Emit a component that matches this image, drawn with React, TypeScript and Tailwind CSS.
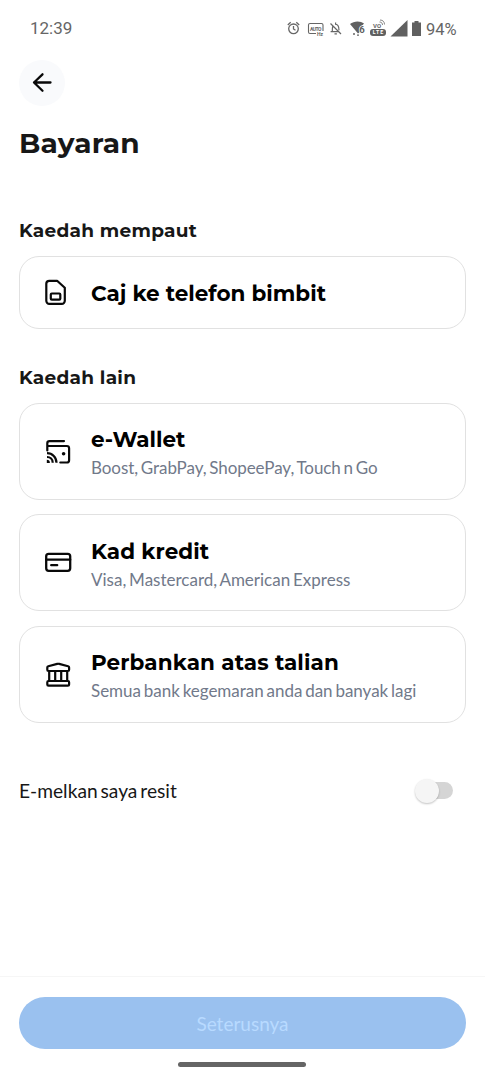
import type { ReactNode } from "react";

const heading = "font-['Montserrat','Inter',sans-serif] font-bold whitespace-nowrap";

function StatusIcons() {
  return (
    <svg width="138" height="20" viewBox="0 0 138 20" fill="none" stroke="#666" strokeWidth="1.3">
      <circle cx="6.5" cy="9.8" r="4.8" />
      <path d="M6.5 7v3l2 1.3M.8 6 3.7 3.3M12.2 6 9.3 3.3" />
      <path d="M29 14.5h-6a1.5 1.5 0 0 1-1.5-1.5V6a1.5 1.5 0 0 1 1.5-1.5h11.5A1.5 1.5 0 0 1 36 6v6" strokeWidth="1.1" />
      <text x="22.9" y="11.5" fontSize="5" fontWeight="700" fontFamily="Roboto, sans-serif" fill="#666" stroke="none" textLength="11.5">AUTO</text>
      <text x="30" y="16.8" fontSize="5" fontWeight="700" fontFamily="Roboto, sans-serif" fill="#666" stroke="none">Hz</text>
      <path d="M43.5 4.5 54 15M46 6.800c-.7 1-.7 2-.7 5.700H51M43.600 12.700h8M48 5.200c3 0 4 2 4 6M48.600 3.500v1.700M47.500 14.800h2.400" strokeWidth="1.2" />
      <path d="M63 5C67 1.600 73.500 1.600 77 4.500l-2.300 2.700v4.300l-3.700 3Z" fill="#606060" stroke="none" />
      <path d="M66 15h2M70 16.200h2" />
      <text x="72.3" y="13.5" fontSize="9.5" fontWeight="700" fontFamily="Roboto, sans-serif" fill="#606060" stroke="#fff" strokeWidth="1.5" paintOrder="stroke">6</text>
      <rect x="83" y="10" width="16" height="7" rx="3" fill="#606060" stroke="none" />
      <text x="85.7" y="15.4" fontSize="5.2" fontWeight="700" fontFamily="Roboto, sans-serif" fill="#fff" stroke="none" textLength="10.5">LTE</text>
      <text x="86" y="8.8" fontSize="6" fontWeight="700" fontFamily="Roboto, sans-serif" fill="#666" stroke="none">VO</text>
      <path d="M92.5 3c2 0 3 1.200 3 3M93 1c3 0 4.500 2 4.500 4.500" strokeWidth=".8" />
      <path d="M103.5 17.5 120.5 1v16.500Z" fill="#606060" stroke="none" />
      <path d="M125 3.500h2.500V2h4v1.500h2.500v13.500h-9Z" fill="#606060" stroke="none" />
    </svg>
  );
}

function SimIcon() {
  return (
    <svg width="30" height="30" viewBox="0 0 30 30" fill="none" stroke="#090909" strokeWidth="2.2" strokeLinejoin="round">
      <path d="M6.300 2.800h7.800L21.800 9.800v13a3 3 0 0 1-3 3H6.300a3 3 0 0 1-3-3v-17a3 3 0 0 1 3-3Z" />
      <rect x="7.8" y="15.5" width="9.5" height="6.2" rx="1" />
    </svg>
  );
}

function WalletIcon() {
  return (
    <svg width="30" height="30" viewBox="0 0 30 30" fill="none" stroke="#090909" strokeWidth="2.2" strokeLinecap="round" strokeLinejoin="round">
      <path d="M4.300 13.500V6.300a2.200 2.200 0 0 1 2.200-2.200H21M4.300 9h19.500a2.300 2.300 0 0 1 2.300 2.300v11.900a2.300 2.300 0 0 1-2.300 2.300h-6.500" />
      <path d="M4 16.200c5.400 0 9.500 4.100 9.500 9.500M4 20c3.300 0 5.700 2.400 5.700 5.700" strokeLinecap="butt" />
      <path d="M3.800 22.800c2 0 3.100 1.100 3.100 3.100H3.800Z" fill="#090909" stroke="none" />
      <circle cx="20.6" cy="16.8" r="1.8" fill="#090909" stroke="none" />
    </svg>
  );
}

function CardIcon() {
  return (
    <svg width="30" height="30" viewBox="0 0 30 30" fill="none" stroke="#090909" strokeWidth="2.3" strokeLinecap="round">
      <rect x="3.2" y="5.8" width="24" height="17" rx="2.5" />
      <path d="M3.200 11.700h24M8.200 17.200h6" />
    </svg>
  );
}

function BankIcon() {
  return (
    <svg width="30" height="30" viewBox="0 0 30 30" fill="none" stroke="#090909" strokeWidth="2.2" strokeLinejoin="round">
      <path d="M4.300 7.500c0-.7.300-1.100 1-1.300L14.200 3.900q1-.25 2 0l8.900 2.300c.7.200 1 .6 1 1.300v2.300c0 .8-.4 1.200-1.200 1.200H5.500c-.8 0-1.200-.4-1.200-1.200ZM6.200 11v10.500M12.200 11v10.500M18.200 11v10.500M24.200 11v10.500" />
      <rect x="4.3" y="21" width="21.8" height="4.7" rx="1.2" />
    </svg>
  );
}

type MethodProps = { icon: ReactNode; title: string; titleClass?: string; detail?: string; detailClass?: string };

function Method({ icon, title, titleClass = "", detail, detailClass = "" }: MethodProps) {
  return (
    <button className={`flex w-full shrink-0 items-center rounded-[20px] border-[1.5px] border-[#e1e1e1] pl-[23px] text-left ${detail ? "h-[97px]" : "h-[73px]"}`}>
      <span className="w-[48px] shrink-0 pt-[1.5px]">{icon}</span>
      <span className={`flex flex-col ${detail ? "pt-[5px]" : "pt-[2px]"}`}>
        <span className={`${heading} text-[21.5px] leading-[28px] text-black ${titleClass}`}>{title}</span>
        {detail && <span className={`mt-px text-[17px] leading-[28px] [word-spacing:-1.5px] whitespace-nowrap text-[#71798a] ${detailClass}`}>{detail}</span>}
      </span>
    </button>
  );
}

export default function App() {
  return (
    <div className="flex h-[1080px] w-[485px] flex-col overflow-hidden bg-white font-['Lato',sans-serif] text-[#171717]">
      <header className="flex h-[57px] shrink-0 items-center justify-between pr-[28px] pl-[30px] font-['Roboto',sans-serif] text-[17px] text-[#666]">
        <span>12:39</span>
        <span className="flex items-center gap-px">
          <StatusIcons />
          <span className="w-[31px] pt-[3px] text-[16.5px]">94%</span>
        </span>
      </header>

      <main className="flex flex-1 flex-col px-[19px] pt-[3px]">
        <button aria-label="Kembali" className="flex size-[46px] items-center justify-center rounded-full bg-[#f9fafc]">
          <svg width="22" height="22" viewBox="0 0 22 22" fill="none" stroke="#090909" strokeWidth="2.3" strokeLinecap="round" strokeLinejoin="round">
            <path d="M19.500 10.500H3M11.500 2.300 3 10.500l8.500 8.300" />
          </svg>
        </button>
        <h1 className={`${heading} mt-[19px] self-start text-[28px] leading-[36px] tracking-[0.2px]`}>Bayaran</h1>

        <h2 className={`${heading} mt-[57px] self-start text-[18.5px] leading-[26px] tracking-[0.28px]`}>Kaedah mempaut</h2>
        <section className="mt-[11.5px]">
          <Method icon={<SimIcon />} title="Caj ke telefon bimbit" />
        </section>

        <h2 className={`${heading} mt-[36px] self-start text-[18.5px] leading-[26px] tracking-[0.28px]`}>Kaedah lain</h2>
        <section className="mt-[12px] flex flex-col gap-[14.5px]">
          <Method icon={<WalletIcon />} title="e-Wallet" detail="Boost, GrabPay, ShopeePay, Touch n Go" detailClass="tracking-[-0.07px]" />
          <Method icon={<CardIcon />} title="Kad kredit" titleClass="tracking-[0.1px]" detail="Visa, Mastercard, American Express" />
          <Method icon={<BankIcon />} title="Perbankan atas talian" titleClass="tracking-[0.12px]" detail="Semua bank kegemaran anda dan banyak lagi" detailClass="tracking-[-0.02px]" />
        </section>

        <div className="mt-[53px] flex h-[30px] items-center justify-between pr-[13px]">
          <span className="pt-px text-[19.2px] [word-spacing:-2px]">E-melkan saya resit</span>
          <button role="switch" aria-checked="false" aria-label="E-melkan saya resit" className="flex h-[24px] w-[38px] items-center">
            <span className="z-10 size-[24px] shrink-0 rounded-full bg-[#f5f5f5] shadow-[0_1px_2px_rgba(0,0,0,0.24)]" />
            <span className="-ml-[14px] h-[17px] w-[28px] shrink-0 rounded-full bg-[#d5d5d5]" />
          </button>
        </div>
      </main>

      <footer className="flex h-[104px] shrink-0 flex-col items-center border-t border-[#f6f6f6] px-[19px] pt-[20px]">
        <button className="h-[52px] w-full rounded-full bg-[#9ac1ef] pt-[2px] text-[19px] text-[#b8daff]">Seterusnya</button>
        <div className="mt-[13px] mr-[2px] h-[5px] w-[128px] rounded-full bg-[#656565]" />
      </footer>
    </div>
  );
}
